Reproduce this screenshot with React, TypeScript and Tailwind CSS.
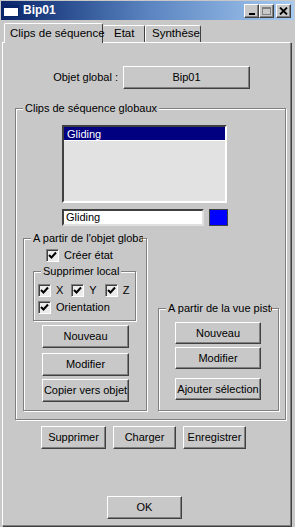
import type { ReactNode } from 'react';

const Btn = ({ children, className = '' }: { children: ReactNode; className?: string }) => (
  <div
    className={`flex items-center justify-center bg-[#c8c8c8] border border-t-white border-l-white border-r-[#404040] border-b-[#404040] shadow-[inset_-1px_-1px_0_#808080] whitespace-nowrap ${className}`}
  >
    {children}
  </div>
);

const Check = ({ label, className = '' }: { label: string; className?: string }) => (
  <div className={`flex items-center ${className}`}>
    <div className="w-[13px] h-[13px] bg-[#ececec] border border-t-[#808080] border-l-[#808080] border-r-white border-b-white shadow-[inset_1px_1px_0_#404040] flex items-center justify-center">
      <svg width="9" height="9" viewBox="0 0 9 9">
        <path d="M1 4 L3.5 6.5 L8 1.5" stroke="#000" strokeWidth="2" fill="none" />
      </svg>
    </div>
    <span className="ml-[5px]">{label}</span>
  </div>
);

const Group = ({
  label,
  labelW,
  className = '',
  children,
}: {
  label: string;
  labelW?: string;
  className?: string;
  children?: ReactNode;
}) => (
  <div className={`relative border border-[#808080] shadow-[inset_1px_1px_0_#fff,1px_1px_0_#fff] ${className}`}>
    <span
      className={`absolute -top-[7px] left-[7px] px-[2px] bg-[#c8c8c8] leading-[13px] whitespace-nowrap overflow-hidden ${labelW ?? ''}`}
    >
      {label}
    </span>
    {children}
  </div>
);

export default function App() {
  return (
    <div className="w-[295px] h-[527px] bg-[#c8c8c8] overflow-hidden font-['Liberation_Sans',Arial,sans-serif] text-[11px] text-black leading-[13px]">
      {/* title bar */}
      <div className="mt-[1px] mx-[1px] h-[19px] flex items-center bg-gradient-to-r from-[#0a246a] via-[#5a84c0] to-[#a6caf0]">
        <div className="ml-[2px] w-[16px] h-[12px] bg-white border border-[#0a246a] border-t-[3px]" />
        <span className="ml-[4px] font-bold text-white text-[12px]">Bip01</span>
        <div className="ml-auto mr-[3px] flex items-center">
          <Btn className="w-[15px] h-[14px]">
            <div className="w-[6px] h-[2px] bg-black mt-[6px]" />
          </Btn>
          <Btn className="w-[15px] h-[14px]">
            <div className="w-[9px] h-[8px] border border-[#808080] border-t-2" />
          </Btn>
          <Btn className="w-[15px] h-[14px] ml-[2px]">
            <svg width="9" height="8" viewBox="0 0 9 8">
              <path d="M1 0.5 L8 7.5 M8 0.5 L1 7.5" stroke="#000" strokeWidth="1.8" />
            </svg>
          </Btn>
        </div>
      </div>

      {/* tabs */}
      <div className="mt-[2px] h-[20px] flex items-end pl-[4px] whitespace-nowrap">
        <div className="relative z-10 -mb-px h-[20px] w-[99px] pl-[5px] pt-[3px] bg-[#c8c8c8] border border-b-0 border-t-white border-l-white border-r-[#404040] rounded-t-[2px] text-[11.5px]">
          Clips de séquence
        </div>
        <div className="h-[17px] w-[42px] pl-[11px] pt-[1px] border border-b-0 border-t-white border-l-0 border-r-[#404040] rounded-t-[2px] text-[11.5px]">
          Etat
        </div>
        <div className="h-[17px] w-[56px] pl-[6px] pt-[1px] border border-b-0 border-t-white border-l-white border-r-[#404040] rounded-t-[2px] text-[11.5px]">
          Synthèse
        </div>
      </div>

      {/* panel */}
      <div className="ml-[2px] w-[289px] h-[484px] border border-t-white border-l-white border-r-[#808080] border-b-[#808080] shadow-[1px_1px_0_#404040]">
        <div className="mt-[23px] flex items-center">
          <span className="w-[115px] text-right">Objet global :</span>
          <Btn className="ml-[5px] w-[127px] h-[23px]">Bip01</Btn>
        </div>

        <Group label="Clips de séquence globaux" className="ml-[12px] mt-[19px] w-[271px] h-[312px]">
          <div className="ml-[46px] mt-[16px] w-[165px] h-[78px] bg-[#e2e2e2] border-2 border-t-[#404040] border-l-[#404040] border-r-white border-b-white">
            <div className="h-[14px] bg-[#000080] text-white pl-[3px] leading-[14px] border-b border-white">Gliding</div>
          </div>
          <div className="ml-[46px] mt-[6px] flex">
            <div className="w-[142px] h-[17px] bg-white border-2 border-t-[#404040] border-l-[#404040] border-r-[#e0e0e0] border-b-[#e0e0e0] pl-[2px] leading-[13px]">
              Gliding
            </div>
            <div className="ml-[5px] w-[19px] h-[17px] bg-[#0000ff] border border-[#404040]" />
          </div>

          <div className="ml-[7px] mt-[12px] flex items-end">
            <Group label="A partir de l'objet global" labelW="w-[112px]" className="w-[124px] h-[173px]">
              <Check label="Créer état" className="ml-[22px] mt-[10px]" />
              <Group label="Supprimer local" className="ml-[9px] mt-[9px] w-[103px] h-[50px]">
                <div className="ml-[4px] mt-[12px] flex items-center">
                  <Check label="X" />
                  <Check label="Y" className="ml-[8px]" />
                  <Check label="Z" className="ml-[8px]" />
                </div>
                <Check label="Orientation" className="ml-[4px] mt-[4px]" />
              </Group>
              <Btn className="ml-[18px] mt-[4px] w-[87px] h-[23px]">Nouveau</Btn>
              <Btn className="ml-[18px] mt-[5px] w-[87px] h-[23px]">Modifier</Btn>
              <Btn className="ml-[18px] mt-[3px] w-[87px] h-[23px]">Copier vers objet</Btn>
            </Group>
            <Group label="A partir de la vue piste" labelW="w-[106px]" className="ml-[11px] w-[121px] h-[103px]">
              <Btn className="ml-[16px] mt-[13px] w-[86px] h-[22px]">Nouveau</Btn>
              <Btn className="ml-[16px] mt-[3px] w-[86px] h-[22px]">Modifier</Btn>
              <Btn className="ml-[16px] mt-[9px] w-[86px] h-[22px]">Ajouter sélection</Btn>
            </Group>
          </div>
        </Group>

        <div className="ml-[38px] mt-[6px] flex gap-[7px]">
          <Btn className="w-[65px] h-[23px]">Supprimer</Btn>
          <Btn className="w-[63px] h-[23px]">Charger</Btn>
          <Btn className="w-[63px] h-[23px]">Enregistrer</Btn>
        </div>

        <Btn className="ml-[104px] mt-[47px] w-[75px] h-[23px]">OK</Btn>
      </div>
    </div>
  );
}
